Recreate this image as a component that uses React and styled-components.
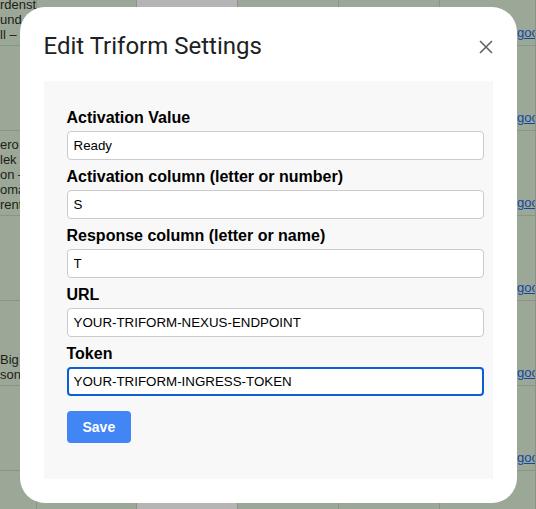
import React from 'react';
import styled, { createGlobalStyle } from 'styled-components';

const GlobalStyle = createGlobalStyle`
  html, body {
    margin: 0;
    padding: 0;
    overflow: hidden;
    font-family: "Liberation Sans", Arial, sans-serif;
  }
`;

const rows = [
  { left: ['rdenst', 'und', 'll –'] },
  { left: [] },
  { left: ['ero', 'lek', 'on –', 'omat', 'rent'] },
  { left: [] },
  { left: ['Big', 'son'] },
  { left: [] },
  { left: [] },
];

const fields = [
  { label: 'Activation Value', value: 'Ready' },
  { label: 'Activation column (letter or number)', value: 'S' },
  { label: 'Response column (letter or name)', value: 'T' },
  { label: 'URL', value: 'YOUR-TRIFORM-NEXUS-ENDPOINT' },
  { label: 'Token', value: 'YOUR-TRIFORM-INGRESS-TOKEN', focused: true },
];

const App = () => (
  <>
    <GlobalStyle />
    <Viewport>
      <Sheet>
        {rows.map((row, i) => (
          <React.Fragment key={i}>
            <Cell>
              {row.left.map(line => (
                <CellLine key={line}>{line}</CellLine>
              ))}
            </Cell>
            <Cell />
            <Cell grey />
            <Cell />
            <Cell />
            <Cell>
              <CellLink href="#">https://www.google.com/forms</CellLink>
            </Cell>
          </React.Fragment>
        ))}
      </Sheet>
    </Viewport>

    <Overlay>
      <Dialog>
        <Header>
          <Title>Edit Triform Settings</Title>
          <CloseButton aria-label="Close">
            <svg width="14" height="14" viewBox="0 0 14 14">
              <path d="M1 1L13 13M13 1L1 13" stroke="#5f6368" strokeWidth="1.6" fill="none" />
            </svg>
          </CloseButton>
        </Header>

        <Panel>
          {fields.map(f => (
            <Field key={f.label}>
              <Label>{f.label}</Label>
              <Input defaultValue={f.value} focused={f.focused} />
            </Field>
          ))}
          <SaveButton>Save</SaveButton>
        </Panel>
      </Dialog>
    </Overlay>
  </>
);

export default App;

const Viewport = styled.div`
  height: 509px;
  overflow: hidden;
  background: #9ba797;
`;

const Sheet = styled.div`
  display: grid;
  grid-template-columns: 37px 100px 101px 101px 101px 1fr;
  grid-auto-rows: 85px;
  margin-top: -39px;
  width: 536px;
`;

const Cell = styled.div`
  display: flex;
  flex-direction: column;
  justify-content: flex-end;
  overflow: hidden;
  box-sizing: border-box;
  border-right: 1px solid #8b9587;
  border-bottom: 1px solid #8b9587;
  padding: 0 0 3px 0;
  background: ${props => (props.grey ? '#b5b5b5' : 'transparent')};
`;

const CellLine = styled.span`
  font-size: 13px;
  line-height: 15px;
  color: #1b1d1a;
  white-space: nowrap;
`;

const CellLink = styled.a`
  font-size: 13px;
  line-height: 15px;
  color: #15479e;
  white-space: nowrap;
  padding-left: 7px;
  margin-bottom: 2px;
`;

const Overlay = styled.div`
  position: fixed;
  inset: 0;
  display: flex;
  align-items: center;
  justify-content: center;
`;

const Dialog = styled.div`
  width: 497px;
  box-sizing: border-box;
  padding: 24px;
  background: #fff;
  border-radius: 25px;
`;

const Header = styled.div`
  display: flex;
  align-items: center;
  justify-content: space-between;
  height: 30px;
  margin-bottom: 20px;
`;

const Title = styled.h2`
  margin: 0;
  font-family: Roboto, "Noto Sans", sans-serif;
  font-size: 24px;
  font-weight: 400;
  color: #202124;
  line-height: 30px;
`;

const CloseButton = styled.button`
  display: flex;
  align-items: center;
  justify-content: center;
  padding: 0;
  border: none;
  background: none;
  width: 14px;
  height: 14px;
  margin-top: 2px;
  cursor: pointer;
`;

const Panel = styled.div`
  background: #f8f8f8;
  padding: 28px 9px 36px 23px;
`;

const Field = styled.div`
  display: flex;
  flex-direction: column;
`;

const Label = styled.label`
  display: block;
  font-size: 16px;
  font-weight: 700;
  color: #000;
  margin-bottom: 4px;
`;

const Input = styled.input`
  display: block;
  box-sizing: border-box;
  width: 100%;
  height: 29px;
  margin: 0 0 8px 0;
  padding: 0 ${props => (props.focused ? '5px' : '6px')};
  font-family: "Liberation Sans", Arial, sans-serif;
  font-size: 13.33px;
  color: #000;
  background: #fff;
  border: ${props => (props.focused ? '2px solid #0b5ed3' : '1px solid #cbcbcb')};
  border-radius: 4px;
  outline: none;
`;

const SaveButton = styled.button`
  margin-top: 7px;
  height: 32px;
  padding: 0 16px;
  border: none;
  border-radius: 4px;
  background: #4285f4;
  color: #fff;
  font-family: "Liberation Sans", Arial, sans-serif;
  font-size: 14px;
  font-weight: 700;
  cursor: pointer;
`;
